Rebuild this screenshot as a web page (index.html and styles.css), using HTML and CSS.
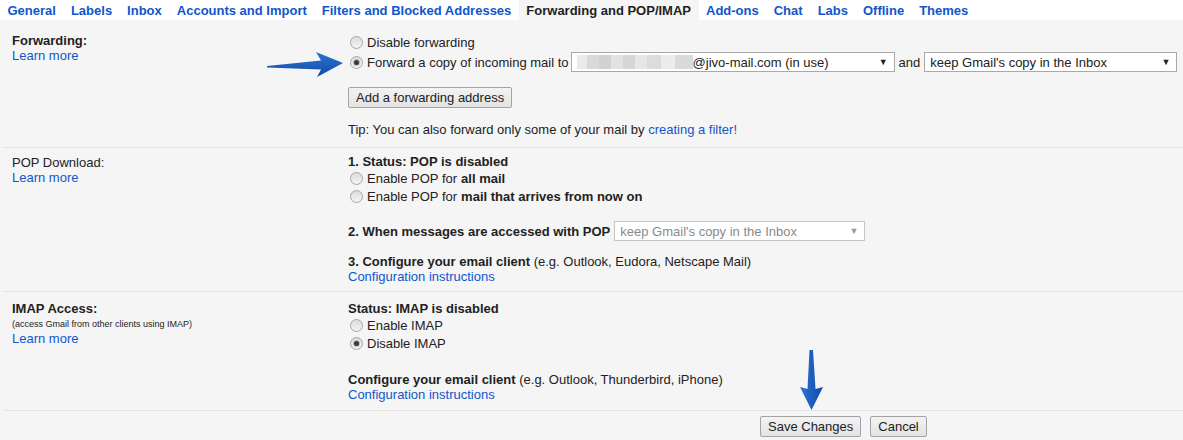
FILE: index.html
```html
<!DOCTYPE html>
<html lang="en">
<head>
    <meta charset="UTF-8">
    <title>Settings - Forwarding and POP/IMAP</title>
    <link rel="stylesheet" href="styles.css">
</head>
<body>
<div class="tabs">
    <a class="tab" href="#">General</a>
    <a class="tab" href="#">Labels</a>
    <a class="tab" href="#">Inbox</a>
    <a class="tab" href="#">Accounts and Import</a>
    <a class="tab" href="#">Filters and Blocked Addresses</a>
    <span class="tab active">Forwarding and POP/IMAP</span>
    <a class="tab" href="#">Add-ons</a>
    <a class="tab" href="#">Chat</a>
    <a class="tab" href="#">Labs</a>
    <a class="tab" href="#">Offline</a>
    <a class="tab" href="#">Themes</a>
</div>

<div class="settings">
    <!-- Forwarding -->
    <div class="section forwarding">
        <div class="label">
            <b>Forwarding:</b>
            <a href="#">Learn more</a>
        </div>
        <div class="value">
            <label class="radio-row"><input type="radio" name="fwd"> Disable forwarding</label>
            <label class="radio-row fwd-row">
                <input type="radio" name="fwd" checked> Forward a copy of incoming mail to
                <span class="select wide"><span class="blur"></span>@jivo-mail.com (in use)<i>▼</i></span>
                and
                <span class="select mid">keep Gmail's copy in the Inbox<i>▼</i></span>
            </label>
            <button class="btn add-btn">Add a forwarding address</button>
            <div class="tip">Tip: You can also forward only some of your mail by <a href="#">creating a filter!</a></div>
        </div>
    </div>

    <!-- POP -->
    <div class="section pop">
        <div class="label">
            <b class="plain">POP Download:</b>
            <a href="#">Learn more</a>
        </div>
        <div class="value">
            <div class="status"><b>1. Status: POP is disabled</b></div>
            <label class="radio-row short"><input type="radio" name="pop"> Enable POP for <b>all mail</b></label>
            <label class="radio-row short"><input type="radio" name="pop"> Enable POP for <b>mail that arrives from now on</b></label>
            <div class="pop-access">
                <b>2. When messages are accessed with POP</b>
                <span class="select mid disabled">keep Gmail's copy in the Inbox<i>▼</i></span>
            </div>
            <div class="client"><b>3. Configure your email client</b> (e.g. Outlook, Eudora, Netscape Mail)</div>
            <a class="line" href="#">Configuration instructions</a>
        </div>
    </div>

    <!-- IMAP -->
    <div class="section imap">
        <div class="label">
            <b>IMAP Access:</b>
            <small>(access Gmail from other clients using IMAP)</small>
            <a href="#">Learn more</a>
        </div>
        <div class="value">
            <div class="status"><b>Status: IMAP is disabled</b></div>
            <label class="radio-row short"><input type="radio" name="imap"> Enable IMAP</label>
            <label class="radio-row short"><input type="radio" name="imap" checked> Disable IMAP</label>
            <div class="client gap"><b>Configure your email client</b> (e.g. Outlook, Thunderbird, iPhone)</div>
            <a class="line" href="#">Configuration instructions</a>
        </div>
    </div>

    <div class="actions">
        <button class="btn">Save Changes</button>
        <button class="btn">Cancel</button>
    </div>
</div>

<!-- annotation arrows -->
<svg class="arrow arrow-right" width="80" height="28" viewBox="0 0 80 28">
    <defs>
        <linearGradient id="ga" x1="0" y1="0" x2="0" y2="1">
            <stop offset="0" stop-color="#2f73d2"/>
            <stop offset="1" stop-color="#0f4aa6"/>
        </linearGradient>
    </defs>
    <path d="M2 16 L56 10.5 L51 2 L78 13 L52 27 L56 19.5 L2 17.5 Z" fill="url(#ga)"/>
</svg>
<svg class="arrow arrow-down" width="28" height="64" viewBox="0 0 28 64">
    <defs>
        <linearGradient id="gb" x1="0" y1="0" x2="1" y2="0">
            <stop offset="0" stop-color="#2f73d2"/>
            <stop offset="1" stop-color="#0f4aa6"/>
        </linearGradient>
    </defs>
    <path d="M11.5 2 L15 2 L17.5 41 L25 39 L13.5 62 L2 39 L9.5 41 Z" fill="url(#gb)"/>
</svg>
</body>
</html>
```

FILE: styles.css
```css
body {
    margin: 0;
    font-family: "Liberation Sans", Arial, sans-serif;
    font-size: 13px;
    color: #222;
    background: #f5f5f5;
}
a {
    color: #15c;
    text-decoration: none;
}
b {
    font-weight: bold;
}

.tabs {
    display: flex;
    height: 20px;
    background: white;
}
.tab {
    padding: 1px 7.5px 0;
    line-height: 19px;
    font-weight: bold;
    color: #15c;
    white-space: nowrap;
}
.tab.active {
    background: #f5f5f5;
    color: #222;
}

.settings {
    padding-left: 4px;
}
.section {
    display: flex;
    border-bottom: 1px solid #e3e3e3;
}
.label {
    width: 336px;
    padding-left: 8px;
    line-height: 15px;
}
.label b,
.label a,
.label small {
    display: block;
}
.label b.plain {
    font-weight: normal;
}
.value {
    flex: 1;
}

/* radios */
.radio-row {
    display: flex;
    align-items: center;
    height: 20px;
    white-space: nowrap;
}
.radio-row.short {
    height: 18px;
}
.radio-row b {
    margin-left: 4px;
}
input[type="radio"] {
    appearance: none;
    -webkit-appearance: none;
    width: 13px;
    height: 13px;
    margin: 0 4px 0 2px;
    border: 1px solid #a6a6a6;
    border-radius: 50%;
    background: linear-gradient(#dcdcdc, #f4f4f4);
    box-sizing: border-box;
    display: flex;
    align-items: center;
    justify-content: center;
}
input[type="radio"]:checked::after {
    content: "";
    width: 5px;
    height: 5px;
    border-radius: 50%;
    background: #3a3a3a;
    box-shadow: 0 0 0 1px #bdbdbd;
}

/* fake selects */
.select {
    display: inline-flex;
    align-items: center;
    height: 20px;
    padding: 0 6px 0 5px;
    border: 1px solid #a9a9a9;
    background: white;
    box-sizing: border-box;
    white-space: nowrap;
}
.select i {
    margin-left: auto;
    font-style: normal;
    font-size: 9px;
}
.select.wide {
    width: 324px;
    margin: 0 4px 0 2px;
}
.select.mid {
    width: 253px;
    margin-left: 4px;
}
.select.disabled {
    width: 251px;
    color: #8a8a8a;
    border-color: #c6c6c6;
}
.select.disabled i {
    color: #9a9a9a;
}
.blur {
    width: 116px;
    height: 14px;
    background: linear-gradient(to right,
        #eaeaea 0 10px, #d8d9da 10px 22px, #cfd3d6 22px 34px, #e2e2e2 34px 46px,
        #d6d6d6 46px 58px, #e6e6e6 58px 70px, #dcdcdc 70px 84px, #ececec 84px 98px,
        #dadada 98px 116px);
}

/* buttons */
.btn {
    height: 21px;
    padding: 0 7px;
    font-family: inherit;
    font-size: 13px;
    color: #222;
    border: 1px solid #a3a3a3;
    border-radius: 2px;
    background: linear-gradient(#f3f3f3, #e3e3e3);
    cursor: pointer;
}
.add-btn {
    display: block;
    margin-top: 15px;
}

/* forwarding */
.forwarding {
    padding: 12px 0 10px;
}
.forwarding .label {
    padding-top: 1px;
}
.tip {
    margin-top: 14px;
    line-height: 15px;
}

/* pop */
.pop {
    padding: 7px 0 7px;
}
.status {
    line-height: 14px;
}
.pop-access {
    display: flex;
    align-items: center;
    height: 20px;
    margin-top: 16px;
}
.client {
    margin-top: 13px;
    line-height: 15px;
}
.client.gap {
    margin-top: 20px;
}
.line {
    display: block;
    line-height: 15px;
}

/* imap */
.imap {
    padding: 10px 0 8px;
}
.imap .label b {
    line-height: 14px;
}
.imap .label small {
    font-size: 9px;
    line-height: 16px;
}
.imap .label a {
    line-height: 14px;
}

.actions {
    display: flex;
    gap: 9px;
    padding: 5px 0 0 756px;
}

.arrow {
    position: absolute;
}
.arrow-right {
    left: 265px;
    top: 50px;
}
.arrow-down {
    left: 798px;
    top: 348px;
}
```
